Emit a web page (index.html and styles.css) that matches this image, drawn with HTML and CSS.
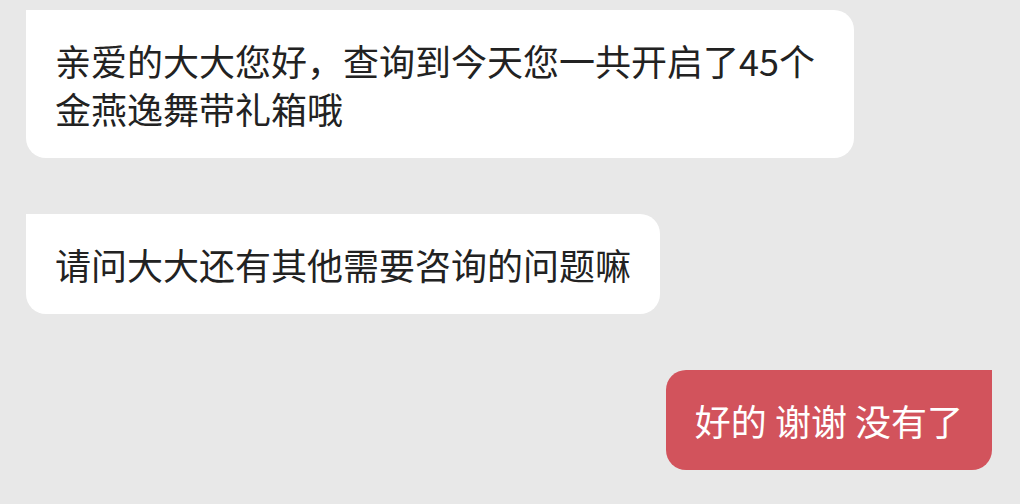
FILE: index.html
```html
<!DOCTYPE html>
<html lang="zh-CN">
<head>
    <meta charset="utf-8">
    <title>聊天</title>
    <link rel="stylesheet" href="styles.css">
</head>
<body>
    <div class="chat">
        <div class="msg msgIn">亲爱的大大您好，查询到今天您一共开启了45个金燕逸舞带礼箱哦</div>
        <div class="msg msgIn">请问大大还有其他需要咨询的问题嘛</div>
        <div class="msg msgOut">好的 谢谢 没有了</div>
    </div>
</body>
</html>
```

FILE: styles.css
```css
body {
    margin: 0px;
    padding: 0px;
    background-color: #e8e8e8;
    font-family: "Noto Sans CJK SC", "Noto Sans", sans-serif;
}

.chat {
    display: flex;
    flex-direction: column;
    gap: 56px;
    padding: 10px 28px 0px 26px;
}

.msg {
    max-width: 828px;
    box-sizing: border-box;
    padding: 26px 29px;
    font-size: 36px;
    line-height: 48px;
}

.msgIn {
    align-self: flex-start;
    background-color: #ffffff;
    color: #222222;
    border-radius: 0px 20px 20px 20px;
}

.msgOut {
    align-self: flex-end;
    background-color: #d2535c;
    color: #ffffff;
    border-radius: 20px 0px 20px 20px;
}
```
